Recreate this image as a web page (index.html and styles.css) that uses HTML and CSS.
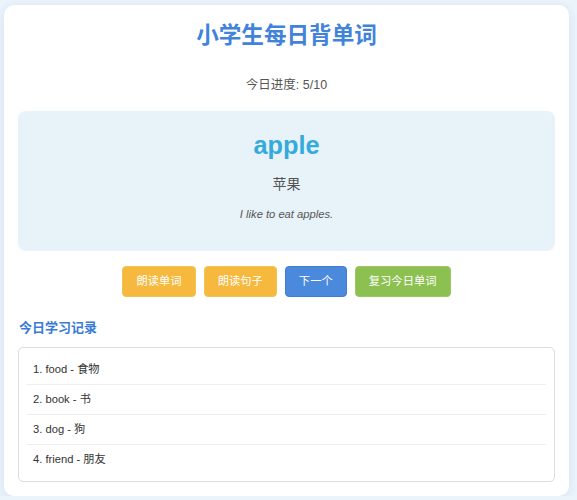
FILE: index.html
```html
<!DOCTYPE html>
<html lang="zh-CN">
<head>
    <meta charset="UTF-8">
    <meta name="viewport" content="width=device-width, initial-scale=1.0">
    <title>小学生每日背单词</title>
    <link rel="stylesheet" href="styles.css">
</head>
<body>

<div class="container">
    <h1>小学生每日背单词</h1>
    <div class="progress">今日进度: <span id="progress">5/10</span></div>

    <div class="word-card">
        <div class="word" id="word">apple</div>
        <div class="meaning" id="meaning">苹果</div>
        <div class="sentence" id="sentence">I like to eat apples.</div>
    </div>

    <div class="controls">
        <button class="btn btn-read">朗读单词</button>
        <button class="btn btn-read">朗读句子</button>
        <button class="btn btn-next">下一个</button>
        <button class="btn btn-review">复习今日单词</button>
    </div>

    <h3 class="history-title">今日学习记录</h3>
    <ul class="history">
        <li>1. food - 食物</li>
        <li>2. book - 书</li>
        <li>3. dog - 狗</li>
        <li>4. friend - 朋友</li>
    </ul>
</div>

</body>
</html>
```

FILE: styles.css
```css
* {
    box-sizing: border-box;
    margin: 0;
    padding: 0;
}

body {
    font-family: "Liberation Sans", Arial, "Noto Sans CJK SC", sans-serif;
    background: #ebf3fb;
    color: #333;
    padding: 5px 8px 0 4px;
}

.container {
    background: #fff;
    border-radius: 10px;
    box-shadow: 0 2px 10px rgba(60, 110, 170, 0.12);
    padding: 15px 14px 14px 14px;
}

h1 {
    text-align: center;
    color: #4283da;
    font-size: 22.6px;
    line-height: 32px;
}

.progress {
    text-align: center;
    font-size: 12.5px;
    line-height: 20px;
    color: #555;
    margin-top: 23px;
}

.word-card {
    background: #e8f3f9;
    border-radius: 8px;
    text-align: center;
    padding: 18px 10px 28px;
    margin-top: 16px;
}

.word {
    font-size: 25.3px;
    line-height: 32px;
    font-weight: bold;
    color: #35aadc;
}

.meaning {
    font-size: 14px;
    line-height: 22px;
    color: #555;
    margin-top: 12px;
}

.sentence {
    font-size: 11.2px;
    line-height: 18px;
    font-style: italic;
    color: #555;
    margin-top: 10px;
}

.controls {
    display: flex;
    justify-content: center;
    gap: 8px;
    margin-top: 15px;
}

.btn {
    font-family: inherit;
    font-size: 11.3px;
    line-height: 15px;
    color: #fff;
    border: 1px solid transparent;
    border-radius: 4px;
    padding: 7px 13px;
    cursor: pointer;
}

.btn-read {
    background: #f6b93e;
    border-color: #f3c257;
}

.btn-next {
    background: #4a89dc;
    border-color: #3f7dd0;
}

.btn-review {
    background: #8cc152;
    border-color: #9ac864;
}

.btn:hover {
    opacity: 0.9;
}

.history-title {
    font-size: 13px;
    line-height: 20px;
    color: #3a7bd5;
    margin-top: 21px;
    margin-left: 1px;
}

.history {
    list-style: none;
    border: 1px solid #ddd;
    border-radius: 5px;
    padding: 7px 8px;
    margin-top: 9px;
}

.history li {
    font-size: 11.2px;
    line-height: 15px;
    padding: 7px 6px;
    border-bottom: 1px solid #eee;
}

.history li:last-child {
    border-bottom: none;
}
```
